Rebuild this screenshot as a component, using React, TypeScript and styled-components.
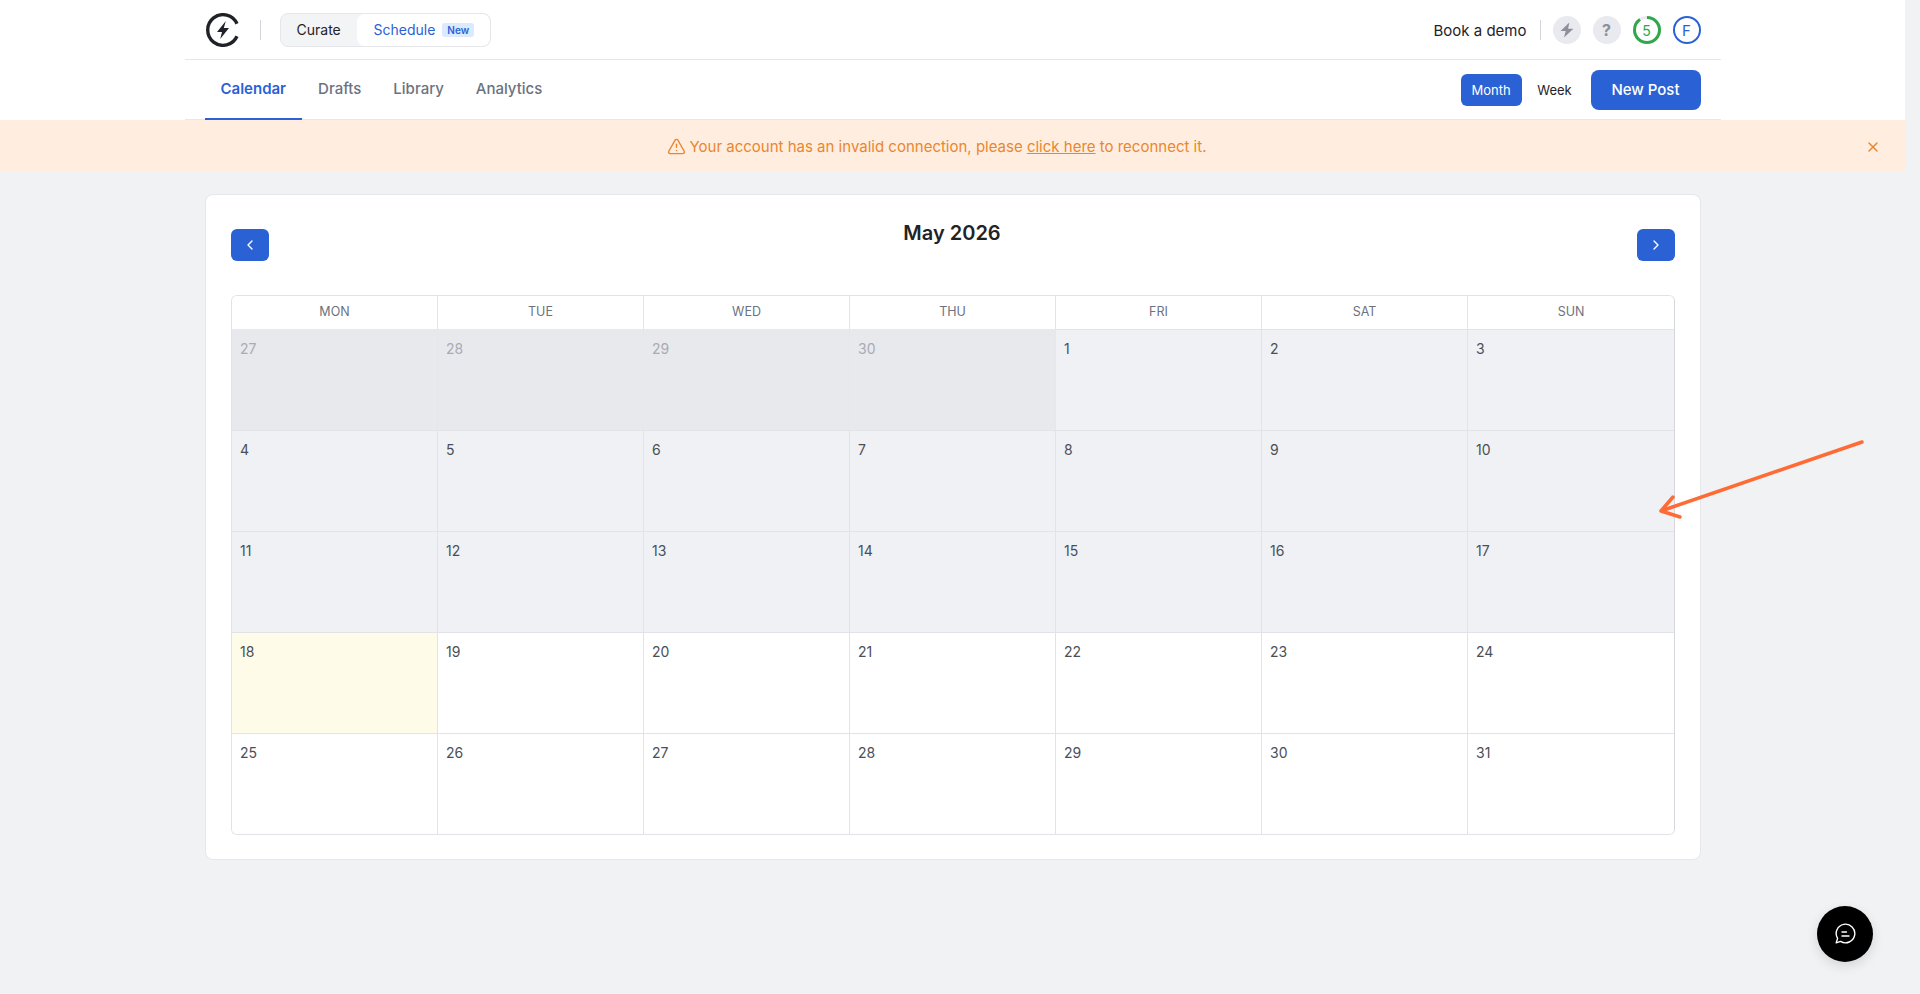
import { FunctionComponent } from 'react';
import styled, { createGlobalStyle } from 'styled-components';
import { ChevronLeft, ChevronRight, TriangleAlert, X } from 'lucide-react';

const BLUE = '#2a62d6';

const GlobalStyle = createGlobalStyle`
	html, body {
		margin: 0;
		padding: 0;
		background: #f1f2f4;
		font-family: Inter, "Liberation Sans", sans-serif;
		color: #1f2328;
	}
	* {
		box-sizing: border-box;
	}
`;

const Page = styled.div`
	width: 1905px;
	min-height: 994px;
`;

const Header = styled.header`
	background: #ffffff;
`;

const HeaderInner = styled.div`
	width: 1536px;
	margin: 0 auto;
`;

const TopBar = styled.div`
	display: flex;
	align-items: center;
	justify-content: space-between;
	height: 60px;
	padding: 1px 20px 0 21px;
	border-bottom: 1px solid #e5e7eb;
`;

const BarGroup = styled.div`
	display: flex;
	align-items: center;
`;

const VDivider = styled.div<{ $left: number; $right: number }>`
	width: 1px;
	height: 20px;
	background: #d1d5db;
	margin: 0 ${(p) => p.$right}px 0 ${(p) => p.$left}px;
`;

const Toggle = styled.div`
	display: flex;
	width: 211px;
	height: 34px;
	background: #f3f4f6;
	border: 1px solid #e5e7eb;
	border-radius: 8px;
	overflow: hidden;
	font-size: 14px;
`;

const CurateTab = styled.div`
	width: 76px;
	padding-left: 16px;
	line-height: 31px;
	color: #1f2328;
`;

const ScheduleTab = styled.div`
	flex: 1;
	display: flex;
	align-items: center;
	gap: 7px;
	padding: 0 0 1px 17px;
	background: #ffffff;
	border-radius: 8px;
	color: ${BLUE};
`;

const NewBadge = styled.span`
	padding: 0 5px;
	height: 14px;
	line-height: 14px;
	font-size: 10px;
	font-weight: 600;
	border-radius: 3px;
	background: #dbeafe;
	color: ${BLUE};
`;

const BookDemo = styled.div`
	font-size: 15px;
	color: #1f2328;
`;

const IconRow = styled.div`
	display: flex;
	gap: 12px;
`;

const RoundIcon = styled.div`
	width: 28px;
	height: 28px;
	border-radius: 50%;
	background: #e9eaef;
	color: #8d8f9a;
	display: flex;
	align-items: center;
	justify-content: center;
	font-size: 16px;
	font-weight: 700;
`;

const CreditRing = styled.div`
	position: relative;
	width: 28px;
	height: 28px;
	display: flex;
	align-items: center;
	justify-content: center;
	font-size: 14px;
	color: #2ea84a;

	svg {
		position: absolute;
		inset: 0;
	}
`;

const Avatar = styled.div`
	width: 28px;
	height: 28px;
	border-radius: 50%;
	border: 2px solid ${BLUE};
	color: ${BLUE};
	display: flex;
	align-items: center;
	justify-content: center;
	font-size: 15px;
`;

const NavBar = styled.div`
	display: flex;
	align-items: center;
	justify-content: space-between;
	height: 60px;
	padding: 0 20px;
	border-bottom: 1px solid #e5e7eb;
`;

const Tabs = styled.nav`
	display: flex;
	align-self: stretch;
`;

const TabItem = styled.a<{ $active?: boolean }>`
	display: flex;
	align-items: center;
	height: 60px;
	padding: 0 16px 2px;
	font-size: 15px;
	font-weight: ${(p) => (p.$active ? 600 : 500)};
	color: ${(p) => (p.$active ? BLUE : '#6b7280')};
	border-bottom: 2px solid ${(p) => (p.$active ? BLUE : 'transparent')};
`;

const ViewGroup = styled.div`
	display: flex;
	align-items: center;
`;

const ViewButton = styled.button<{ $active?: boolean }>`
	height: 32px;
	width: ${(p) => (p.$active ? '61px' : '69px')};
	padding: ${(p) => (p.$active ? '0' : '0 3px 0 0')};
	border: none;
	border-radius: 6px;
	font-family: inherit;
	font-size: 13px;
	background: ${(p) => (p.$active ? BLUE : 'transparent')};
	color: ${(p) => (p.$active ? '#ffffff' : '#1f2328')};
`;

const NewPostButton = styled.button`
	width: 110px;
	height: 40px;
	border: none;
	border-radius: 8px;
	background: ${BLUE};
	color: #ffffff;
	font-family: inherit;
	font-size: 15px;
	font-weight: 500;
`;

const Banner = styled.div`
	position: relative;
	display: flex;
	align-items: center;
	justify-content: center;
	gap: 4px;
	height: 52px;
	padding-right: 32px;
	background: #ffeee0;
	color: #e9862f;
	font-size: 15px;

	a {
		color: inherit;
		text-decoration: underline;
	}
`;

const BannerClose = styled.div`
	position: absolute;
	right: 24px;
	top: 19px;
	display: flex;
	color: #e9862f;
`;

const Main = styled.main`
	padding: 22px 204px 0 205px;
`;

const Card = styled.section`
	height: 666px;
	padding: 25px;
	background: #ffffff;
	border: 1px solid #e5e7eb;
	border-radius: 8px;
`;

const MonthHeader = styled.div`
	display: flex;
	justify-content: space-between;
	align-items: flex-start;
	height: 75px;
`;

const MonthTitle = styled.h2`
	margin: -1px 2px 0 0;
	font-size: 20px;
	line-height: 28px;
	font-weight: 600;
	color: #1f2328;
`;

const ArrowButton = styled.button`
	width: 38px;
	height: 32px;
	margin-top: 9px;
	padding: 0;
	border: none;
	border-radius: 6px;
	background: ${BLUE};
	color: #ffffff;
	display: flex;
	align-items: center;
	justify-content: center;
`;

const Grid = styled.div`
	display: grid;
	grid-template-columns: repeat(7, 206px);
	border-top: 1px solid #e1e3e8;
	border-left: 1px solid #e1e3e8;
	border-bottom: 1px solid #e1e3e8;
	border-right: 1px solid #d5d7dc;
	border-radius: 6px;
	overflow: hidden;
	width: 1444px;
`;

const DayName = styled.div`
	height: 33px;
	line-height: 32px;
	text-align: center;
	font-size: 12.5px;
	font-weight: 400;
	color: #6b7280;
	background: #ffffff;
	border-right: 1px solid #e1e3e8;

	&:nth-child(7) {
		border-right: none;
	}
`;

type DayKind = 'outside' | 'past' | 'today' | 'future';

const dayBackgrounds: Record<DayKind, string> = {
	outside: '#e8e9ed',
	past: '#f0f1f5',
	today: '#fefbe8',
	future: '#ffffff',
};

const DayCell = styled.div<{ $kind: DayKind; $end: boolean }>`
	height: 101px;
	padding: 9px 8px;
	font-size: 14px;
	line-height: 20px;
	background: ${(p) => dayBackgrounds[p.$kind]};
	color: ${(p) => (p.$kind === 'outside' ? '#a8abb2' : '#4a4f57')};
	border-top: 1px solid ${(p) => (p.$kind === 'outside' ? 'transparent' : '#e1e3e8')};
	border-right: ${(p) => (p.$end ? 'none' : `1px solid ${p.$kind === 'outside' ? '#e6e7eb' : '#e1e3e8'}`)};
`;

const Annotation = styled.svg`
	position: absolute;
	left: 1650px;
	top: 430px;
	pointer-events: none;
`;

const ChatButton = styled.button`
	position: fixed;
	left: 1817px;
	top: 906px;
	width: 56px;
	height: 56px;
	padding: 0;
	border: none;
	border-radius: 50%;
	background: #000000;
	display: flex;
	align-items: center;
	justify-content: center;
	box-shadow: 0 4px 12px rgba(0, 0, 0, 0.12);
`;

const days: { n: number; kind: DayKind }[] = [
	...[27, 28, 29, 30].map((n) => ({ n, kind: 'outside' as DayKind })),
	...Array.from({ length: 31 }, (_, i) => ({
		n: i + 1,
		kind: (i + 1 < 18 ? 'past' : i + 1 === 18 ? 'today' : 'future') as DayKind,
	})),
];

const dayNames = ['MON', 'TUE', 'WED', 'THU', 'FRI', 'SAT', 'SUN'];

const Logo = () => (
	<svg width="34" height="34" viewBox="0 0 34 34" fill="none">
		<path d="M31 10.8 A15.3 15.3 0 1 0 31 23.2" stroke="#1f2328" strokeWidth="3.4" />
		<path d="M19.8 8 L11 19 H16 L14.2 26 L23 15 H17.8 Z" fill="#1f2328" />
	</svg>
);

const App: FunctionComponent = () => {
	return (
		<Page>
			<GlobalStyle />
			<Header>
				<HeaderInner>
					<TopBar>
						<BarGroup>
							<Logo />
							<VDivider $left={20} $right={19} />
							<Toggle>
								<CurateTab>Curate</CurateTab>
								<ScheduleTab>
									Schedule <NewBadge>New</NewBadge>
								</ScheduleTab>
							</Toggle>
						</BarGroup>
						<BarGroup>
							<BookDemo>Book a demo</BookDemo>
							<VDivider $left={13} $right={12} />
							<IconRow>
								<RoundIcon>
									<svg width="16" height="16" viewBox="0 0 14 15" fill="#8d8f9a">
										<path d="M9.2 0.5 L1 8.4 H5.8 L4.2 14.5 L13 6.4 H8 Z" />
									</svg>
								</RoundIcon>
								<RoundIcon>?</RoundIcon>
								<CreditRing>
									<svg width="28" height="28" viewBox="0 0 28 28" fill="none">
										<circle cx="14" cy="14" r="12.5" stroke="#e9eaef" strokeWidth="3" />
										<circle
											cx="14"
											cy="14"
											r="12.5"
											stroke="#2ea84a"
											strokeWidth="3"
											strokeDasharray="70.7 78.5"
											transform="rotate(-90 14 14)"
										/>
									</svg>
									5
								</CreditRing>
								<Avatar>F</Avatar>
							</IconRow>
						</BarGroup>
					</TopBar>
					<NavBar>
						<Tabs>
							<TabItem $active>Calendar</TabItem>
							<TabItem>Drafts</TabItem>
							<TabItem>Library</TabItem>
							<TabItem>Analytics</TabItem>
						</Tabs>
						<ViewGroup>
							<ViewButton $active>Month</ViewButton>
							<ViewButton>Week</ViewButton>
							<NewPostButton>New Post</NewPostButton>
						</ViewGroup>
					</NavBar>
				</HeaderInner>
			</Header>
			<Banner>
				<TriangleAlert size={19} strokeWidth={1.8} />
				<span>
					Your account has an invalid connection, please <a href="#">click here</a> to reconnect it.
				</span>
				<BannerClose>
					<X size={16} strokeWidth={2.2} />
				</BannerClose>
			</Banner>
			<Main>
				<Card>
					<MonthHeader>
						<ArrowButton>
							<ChevronLeft size={16} />
						</ArrowButton>
						<MonthTitle>May 2026</MonthTitle>
						<ArrowButton>
							<ChevronRight size={16} />
						</ArrowButton>
					</MonthHeader>
					<Grid>
						{dayNames.map((d) => (
							<DayName key={d}>{d}</DayName>
						))}
						{days.map((d, i) => (
							<DayCell key={i} $kind={d.kind} $end={i % 7 === 6}>
								{d.n}
							</DayCell>
						))}
					</Grid>
				</Card>
			</Main>
			<Annotation width="230" height="100" viewBox="0 0 230 100" fill="none">
				<path
					d="M212 12 L11 81 M23 67 L11 81 L30 87"
					stroke="#ff6b35"
					strokeWidth="3.5"
					strokeLinecap="round"
					strokeLinejoin="round"
				/>
			</Annotation>
			<ChatButton>
				<svg width="22" height="22" viewBox="0 0 22 22" fill="none" stroke="#ffffff" strokeWidth="1.4" strokeLinecap="round">
					<path d="M2.2 19.8 L3.6 15.4 A9.3 9.3 0 1 1 6.6 18.4 Z" strokeLinejoin="round" />
					<path d="M8 9 H12.5 M8 13 H15" />
				</svg>
			</ChatButton>
		</Page>
	);
};

export default App;
